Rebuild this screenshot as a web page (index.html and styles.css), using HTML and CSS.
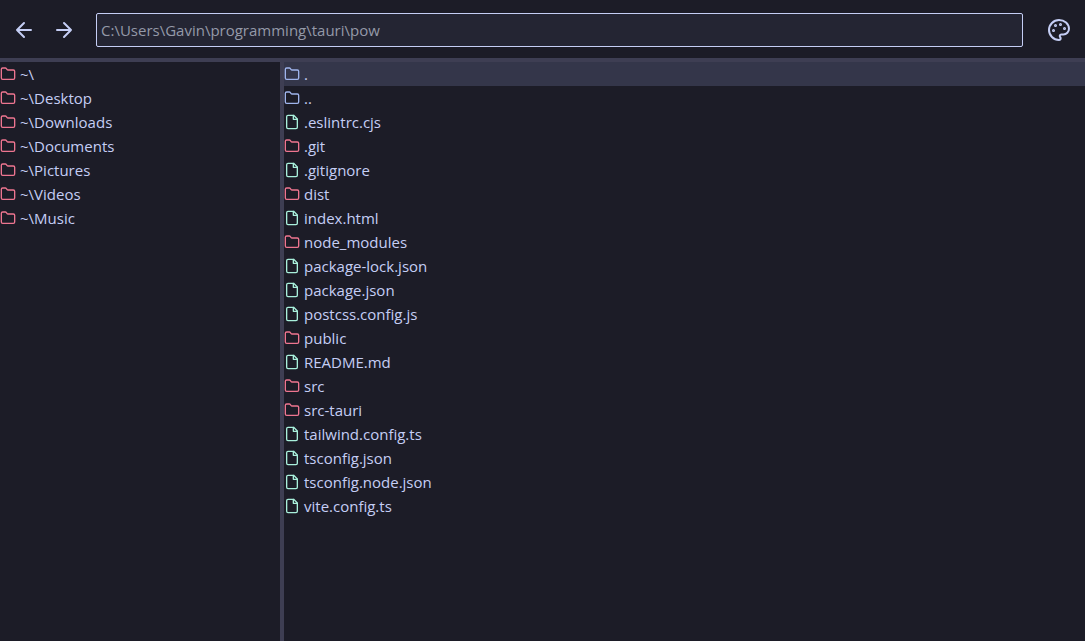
FILE: index.html
```html
<!DOCTYPE html>
<html lang="en">
<head>
<meta charset="utf-8">
<title>File explorer</title>
<link rel="stylesheet" href="styles.css">
</head>
<body>
<svg class="sprite" aria-hidden="true">
  <symbol id="folder" viewBox="0 0 24 24"><path d="M4 20h16a2 2 0 0 0 2-2V8a2 2 0 0 0-2-2h-7.93a2 2 0 0 1-1.66-.9l-.82-1.2A2 2 0 0 0 7.93 3H4a2 2 0 0 0-2 2v13c0 1.1.9 2 2 2Z"/></symbol>
  <symbol id="file" viewBox="0 0 24 24"><path d="M14.5 2H6a2 2 0 0 0-2 2v16a2 2 0 0 0 2 2h12a2 2 0 0 0 2-2V7.5L14.5 2z"/><path d="M14 2v6h6"/></symbol>
</svg>
<header class="toolbar">
  <div class="nav">
    <button class="icon-button" type="button" aria-label="Back"><svg class="icon-large" viewBox="0 0 24 24"><path d="m12 19-7-7 7-7M19 12H5"/></svg></button>
    <button class="icon-button" type="button" aria-label="Forward"><svg class="icon-large" viewBox="0 0 24 24"><path d="M5 12h14M12 5l7 7-7 7"/></svg></button>
  </div>
  <input class="path" type="text" aria-label="Path" placeholder="C:\Users\Gavin\programming\tauri\pow">
  <button class="icon-button" type="button" aria-label="Theme"><svg class="icon-large" viewBox="0 0 24 24"><circle class="dot" cx="13.5" cy="6.5" r=".5"/><circle class="dot" cx="17.5" cy="10.5" r=".5"/><circle class="dot" cx="8.5" cy="7.5" r=".5"/><circle class="dot" cx="6.5" cy="12.5" r=".5"/><path d="M12 2C6.5 2 2 6.5 2 12s4.500 10 10 10c.926 0 1.648-.746 1.648-1.688 0-.437-.18-.835-.437-1.125-.29-.289-.438-.652-.438-1.125a1.640 1.640 0 0 1 1.668-1.668h1.996c3.051 0 5.555-2.503 5.555-5.554C21.965 6.012 17.461 2 12 2z"/></svg></button>
</header>
<main class="panes">
  <nav class="sidebar" aria-label="Places">
    <button class="row" type="button"><svg class="icon folder"><use href="#folder"/></svg>~\</button>
    <button class="row" type="button"><svg class="icon folder"><use href="#folder"/></svg>~\Desktop</button>
    <button class="row" type="button"><svg class="icon folder"><use href="#folder"/></svg>~\Downloads</button>
    <button class="row" type="button"><svg class="icon folder"><use href="#folder"/></svg>~\Documents</button>
    <button class="row" type="button"><svg class="icon folder"><use href="#folder"/></svg>~\Pictures</button>
    <button class="row" type="button"><svg class="icon folder"><use href="#folder"/></svg>~\Videos</button>
    <button class="row" type="button"><svg class="icon folder"><use href="#folder"/></svg>~\Music</button>
  </nav>
  <section class="files" aria-label="Files">
    <button class="row selected" type="button"><svg class="icon parent"><use href="#folder"/></svg>.</button>
    <button class="row" type="button"><svg class="icon parent"><use href="#folder"/></svg>..</button>
    <button class="row" type="button"><svg class="icon file"><use href="#file"/></svg>.eslintrc.cjs</button>
    <button class="row" type="button"><svg class="icon folder"><use href="#folder"/></svg>.git</button>
    <button class="row" type="button"><svg class="icon file"><use href="#file"/></svg>.gitignore</button>
    <button class="row" type="button"><svg class="icon folder"><use href="#folder"/></svg>dist</button>
    <button class="row" type="button"><svg class="icon file"><use href="#file"/></svg>index.html</button>
    <button class="row" type="button"><svg class="icon folder"><use href="#folder"/></svg>node_modules</button>
    <button class="row" type="button"><svg class="icon file"><use href="#file"/></svg>package-lock.json</button>
    <button class="row" type="button"><svg class="icon file"><use href="#file"/></svg>package.json</button>
    <button class="row" type="button"><svg class="icon file"><use href="#file"/></svg>postcss.config.js</button>
    <button class="row" type="button"><svg class="icon folder"><use href="#folder"/></svg>public</button>
    <button class="row" type="button"><svg class="icon file"><use href="#file"/></svg>README.md</button>
    <button class="row" type="button"><svg class="icon folder"><use href="#folder"/></svg>src</button>
    <button class="row" type="button"><svg class="icon folder"><use href="#folder"/></svg>src-tauri</button>
    <button class="row" type="button"><svg class="icon file"><use href="#file"/></svg>tailwind.config.ts</button>
    <button class="row" type="button"><svg class="icon file"><use href="#file"/></svg>tsconfig.json</button>
    <button class="row" type="button"><svg class="icon file"><use href="#file"/></svg>tsconfig.node.json</button>
    <button class="row" type="button"><svg class="icon file"><use href="#file"/></svg>vite.config.ts</button>
  </section>
</main>
</body>
</html>
```
FILE: styles.css
```css
* { box-sizing: border-box; }

body {
  margin: 0;
  min-height: 100vh;
  display: flex;
  flex-direction: column;
  background: #1c1c27;
  color: #c5cef5;
  font: 15px/24px "Segoe UI", "Open Sans", "Noto Sans", sans-serif;
}

button {
  padding: 0;
  border: 0;
  background: none;
  color: inherit;
  font: inherit;
  cursor: pointer;
}

.sprite { display: none; }

svg, symbol {
  fill: none;
  stroke: currentColor;
  stroke-width: 2;
  stroke-linecap: round;
  stroke-linejoin: round;
}

.toolbar {
  display: flex;
  align-items: center;
  gap: 24px;
  padding: 13px 14px 11px 12px;
  border-bottom: 4px solid #3e3e53;
}

.nav {
  display: flex;
  gap: 16px;
  margin-right: -4px;
}

.icon-button { display: flex; }

.icon-large {
  width: 24px;
  height: 24px;
}

.dot { fill: currentColor; }

.path {
  flex: 1;
  min-width: 0;
  height: 34px;
  padding: 4px;
  border: 1px solid #c5cef5;
  border-radius: 2px;
  background: #242533;
  color: #c5cef5;
  font: inherit;
}

.path::placeholder {
  color: #9499a8;
  opacity: 1;
}

.panes {
  flex: 1;
  display: flex;
}

.sidebar {
  flex: 0 0 284px;
  border-right: 4px solid #3e3e53;
}

.files {
  flex: 1;
  min-width: 0;
}

.row {
  display: flex;
  align-items: center;
  gap: 4px;
  width: 100%;
  text-align: left;
}

.selected { background: #34364a; }

.icon {
  flex: none;
  width: 16px;
  height: 16px;
}

.folder { color: #ee7590; }
.parent { color: #9fb4ec; }
.file { color: #a9f0dc; }
```
